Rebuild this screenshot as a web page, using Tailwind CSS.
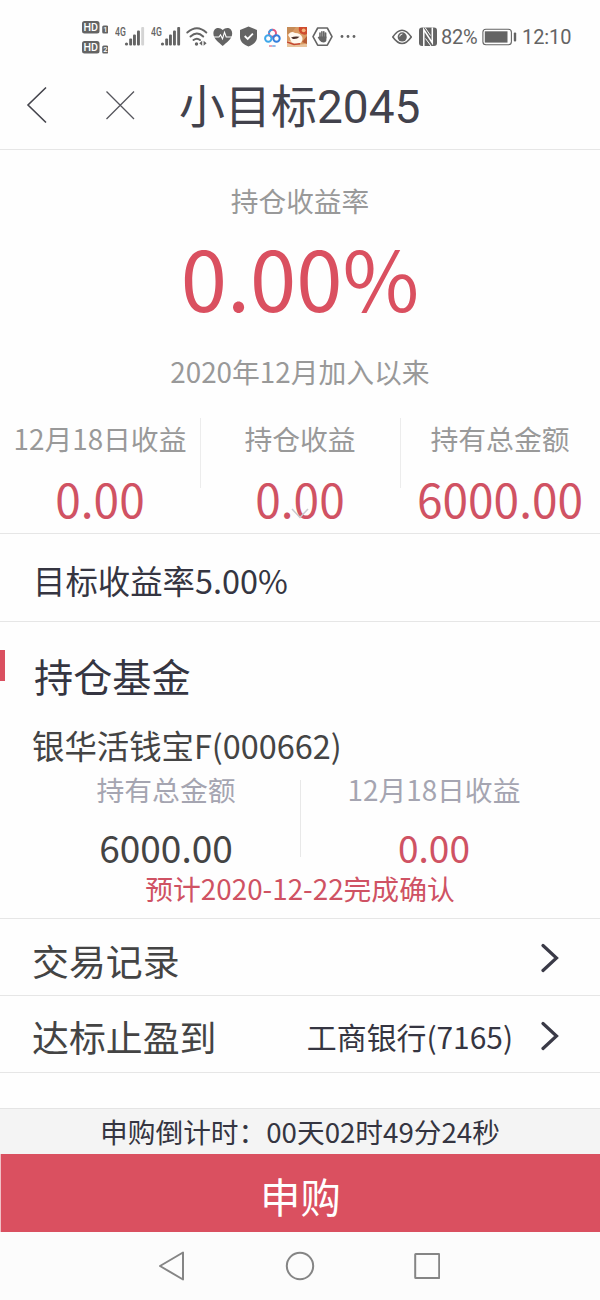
<!DOCTYPE html>
<html lang="zh-CN">
<head>
<meta charset="utf-8">
<title>小目标2045</title>
<script src="https://cdn.jsdelivr.net/npm/@tailwindcss/browser@4"></script>
</head>
<body class="w-[600px] h-[1300px] overflow-hidden bg-[#fefefe] font-['Noto_Sans_CJK_SC',sans-serif] flex flex-col whitespace-nowrap">
  <!-- Status bar -->
  <div class="h-[60px] flex items-start pt-[18px] pl-[82px] text-[#646464] shrink-0">
    <svg class="w-[26px] h-[38px] shrink-0" viewBox="0 0 26 38">
      <g fill="#646464"><rect y="3" width="17.500" height="12.500" rx="2.500"/><rect y="23" width="17.500" height="12.500" rx="2.500"/><rect x="20.200" y="7.500" width="6" height="8" rx="1.500"/><rect x="20.200" y="27.500" width="6" height="8" rx="1.500"/></g>
      <g fill="#fff" font-family="Roboto" font-weight="500"><text x="1.500" y="13.300" font-size="11.500" textLength="14.500" lengthAdjust="spacingAndGlyphs">HD</text><text x="1.500" y="33.300" font-size="11.500" textLength="14.500" lengthAdjust="spacingAndGlyphs">HD</text><text x="21.200" y="14.300" font-size="7.500">1</text><text x="21.200" y="34.300" font-size="7.500">2</text></g>
    </svg>
    <svg class="w-[30px] h-[30px] ml-[7px] shrink-0" viewBox="0 0 30 30" fill="#646464">
      <text x="0" y="17.700" font-family="Roboto" font-weight="500" font-size="12" textLength="10.800" lengthAdjust="spacingAndGlyphs">4G</text>
      <circle cx="11.500" cy="26" r="1.600"/><rect x="14.200" y="20.500" width="2.900" height="7" rx="1"/><rect x="18" y="16.500" width="2.900" height="11" rx="1"/><rect x="22" y="12.500" width="2.900" height="15" rx="1"/><rect x="26.200" y="9" width="2.900" height="18.500" rx="1" fill="#d4d4d4"/>
    </svg>
    <svg class="w-[30px] h-[30px] ml-[6px] shrink-0" viewBox="0 0 30 30" fill="#646464">
      <text x="0" y="17.700" font-family="Roboto" font-weight="500" font-size="12" textLength="10.800" lengthAdjust="spacingAndGlyphs">4G</text>
      <circle cx="11.500" cy="26" r="1.600"/><rect x="14.200" y="20.500" width="2.900" height="7" rx="1"/><rect x="18" y="16.500" width="2.900" height="11" rx="1"/><rect x="22" y="12.500" width="2.900" height="15" rx="1"/><rect x="26.200" y="9" width="2.900" height="18.500" rx="1"/>
    </svg>
    <svg class="w-[22px] h-[30px] ml-[5px] shrink-0" viewBox="0 0 22 30" fill="none" stroke="#646464" stroke-width="1.900" stroke-linecap="round">
      <path d="M1.300 14.500Q11 6 20.300 14.500M4.500 18.500Q11 12.500 17.200 18.500M7.500 22Q11 19.300 14 22"/>
      <circle cx="10.500" cy="26" r="1.700" fill="#646464" stroke="none"/><path d="M16.200 22.700v5l-3-2.500zM17.600 22.700v5l3-2.500z" fill="#646464" stroke="none"/>
    </svg>
    <svg class="w-[20px] h-[30px] ml-[5px] shrink-0" viewBox="0 0 20 30">
      <path d="M9.700 28C6 24.500.4 21 .4 15.500C.4 9.500 6.500 8.500 9.700 12C13 8.500 19.200 9.500 19.200 15.500C19.200 21 13.500 24.500 9.700 28z" fill="#646464"/>
      <path d="M0 19h6l1.500-2.200 2 4 2-6.500 1.700 4.700H20" fill="none" stroke="#fff" stroke-width="1.100"/>
    </svg>
    <svg class="w-[20px] h-[30px] ml-[5px] shrink-0" viewBox="0 0 20 30">
      <path d="M10.500 8.500L19 12v7c0 5-4 7.700-8.500 9.500C6 26.700 2 24 2 19v-7z" fill="#646464"/>
      <path d="M6.700 18l3 3 5.200-5.300" fill="none" stroke="#fff" stroke-width="1.800"/>
    </svg>
    <svg class="w-[18px] h-[30px] ml-[6px] shrink-0" viewBox="0 0 18 30" fill="none" stroke-width="2">
      <circle cx="8.500" cy="15.300" r="3.500" stroke="#e05a80"/><path d="M5 15.300a3.500 3.500 0 0 1 3.500-3.500" stroke="#3b9de8"/>
      <circle cx="4.300" cy="20.500" r="3.200" stroke="#3ea7ea"/><circle cx="12.500" cy="20.500" r="3.200" stroke="#347fdc"/>
      <path d="M5 28h3.300" stroke="#e26c8a" stroke-width="1.300"/><path d="M8.300 28h3.300" stroke="#559be0" stroke-width="1.300"/>
    </svg>
    <svg class="w-[20px] h-[30px] ml-[5px] shrink-0" viewBox="0 0 20 30">
      <rect y="9" width="20" height="20" fill="#d99a63"/>
      <path d="M0 9h9l-4 5-5 2z" fill="#c68b56"/>
      <path d="M0 23q4-1 8 2t12 0v4H0z" fill="#e8c39c"/>
      <path d="M12 9h8v7q-3 1.500-6-.5t-2-6.500z" fill="#cf4b2d"/><circle cx="16.700" cy="12.300" r="1.900" fill="#f3b47c"/>
      <path d="M1 17Q4 12 8 15Q14 15 15.500 20Q16 25.500 10 26Q3 25.500 3 20z" fill="#fff8ee"/>
      <path d="M4 19.500Q8 17.800 12.500 18.800Q10 21.500 6 21z" fill="#4b3029"/><path d="M0 24l7 2.500 6-.8" stroke="#c5472f" stroke-width="1.500" fill="none"/>
      <path d="M15 24l5-6v8z" fill="#b75c34"/>
    </svg>
    <svg class="w-[21px] h-[30px] ml-[5px] shrink-0" viewBox="0 0 21 30">
      <path d="M5.700 10h9.600l4.700 8.600-4.700 8.600H5.700L1 18.600z" fill="none" stroke="#646464" stroke-width="1.600" stroke-linejoin="round"/>
      <path d="M8 15v5M9.900 13.700v6M11.800 13.700v6M13.600 15v5" stroke="#646464" stroke-width="1.600" stroke-linecap="round"/>
      <path d="M7.200 18.500h7.200v3.300q0 2.700-3 2.700-2.300 0-3.700-2l-2-3 .8-.7z" fill="#646464"/>
    </svg>
    <svg class="w-[16px] h-[30px] ml-[7px] shrink-0" viewBox="0 0 16 30" fill="#646464"><circle cx="2" cy="18.500" r="1.400"/><circle cx="8" cy="18.500" r="1.400"/><circle cx="14" cy="18.500" r="1.400"/></svg>
    <svg class="w-[20px] h-[30px] ml-[36px] shrink-0" viewBox="0 0 20 30">
      <path d="M.8 19Q10 5.500 19.300 19Q10 32 .8 19z" fill="none" stroke="#646464" stroke-width="1.600"/><circle cx="10.200" cy="18.900" r="4.600" fill="#646464"/><path d="M7.700 18.500a2.800 2.800 0 0 1 2.700-2.500" stroke="#fff" fill="none"/>
    </svg>
    <svg class="w-[20px] h-[30px] ml-[6px] shrink-0" viewBox="0 0 20 30">
      <rect x="1" y="9.500" width="18" height="18.500" rx="3" fill="#646464"/>
      <path d="M5.800 28V11.500L14.300 25V9.500" fill="none" stroke="#fff" stroke-width="1.500"/>
      <path d="M7 9.500L12.500 17.500M7.500 20.500L13 28" fill="none" stroke="#fff" stroke-width="1"/>
    </svg>
    <span class="ml-[3px] w-[38px] h-[38px] leading-[39px] font-[Roboto] text-[20px] tracking-[-0.2px]">82%</span>
    <svg class="w-[35px] h-[30px] ml-[3px] shrink-0" viewBox="0 0 35 30">
      <rect x=".9" y="11.200" width="28.500" height="15.500" rx="3" fill="none" stroke="#646464" stroke-width="1.100"/><rect x="2.800" y="13.300" width="22.700" height="11.300" fill="#646464"/><rect x="31.800" y="14.500" width="2.400" height="9" rx="1" fill="#646464"/>
    </svg>
    <span class="ml-[5px] h-[38px] leading-[39px] font-[Roboto] text-[20px] tracking-[-0.1px]">12:10</span>
  </div>

  <!-- Title bar -->
  <header class="h-[90px] shrink-0 border-b border-[#e6e6e6] flex items-center pl-[26px]">
    <svg class="w-[22px] h-[38px]" viewBox="0 0 22 38" fill="none" stroke="#44444c" stroke-width="1.600"><path d="M20 1.500L2 19l18 17.500"/></svg>
    <svg class="w-[30px] h-[30px] ml-[57px]" viewBox="0 0 30 30" fill="none" stroke="#55555c" stroke-width="1.300"><path d="M1.500 1.500L29 29M29 1.500L1.500 29"/></svg>
    <h1 class="ml-[44px] mt-[4px] text-[46px] leading-[60px] text-[#42424c] font-[Roboto,'Noto_Sans_CJK_SC',sans-serif]">小目标2045</h1>
  </header>

  <!-- Return summary -->
  <section class="h-[384px] shrink-0 border-b border-[#e6e6e6] text-center text-[#999]">
    <p class="pt-[30px] text-[27.700px] leading-[41px]">持仓收益率</p>
    <p class="-mt-[2px] text-[83.300px] leading-[114px] text-[#da5060]">0.00%</p>
    <p class="pt-[18px] text-[27.800px] leading-[41px]">2020年12月加入以来</p>
    <div class="relative mt-[26px] grid grid-cols-3">
      <div class="relative"><p class="text-[27.800px] leading-[41px]">12月18日收益</p><p class="mt-[9px] text-[46px] leading-[60px] text-[#d05263]">0.00</p><i class="absolute -right-px top-0 w-px h-[70px] bg-[#ececec]"></i></div>
      <div class="relative"><p class="text-[27.800px] leading-[41px]">持仓收益</p><p class="mt-[9px] text-[46px] leading-[60px] text-[#d05263]">0.00</p><i class="absolute -right-px top-0 w-px h-[70px] bg-[#ececec]"></i></div>
      <div><p class="text-[27.800px] leading-[41px]">持有总金额</p><p class="mt-[9px] text-[46px] leading-[60px] text-[#d05263]">6000.00</p></div>
      <svg class="absolute left-[291px] top-[90px] w-[18px] h-[11px]" viewBox="0 0 18 11" fill="none" stroke="#c9c9cd" stroke-width="1.500"><path d="M1 1l8 8.500L17 1"/></svg>
    </div>
  </section>

  <section class="h-[88px] shrink-0 border-b border-[#e6e6e6] pl-[33px] pt-[4px] text-[32.400px] leading-[84px] text-[#353541]">目标收益率5.00%</section>

  <!-- Holdings -->
  <section class="h-[297px] shrink-0 border-b border-[#e6e6e6] relative">
    <i class="absolute left-0 top-[28px] w-[5px] h-[31px] bg-[#da5060]"></i>
    <h2 class="pl-[34px] pt-[23px] text-[39.200px] leading-[60px] text-[#353541]">持仓基金</h2>
    <p class="pl-[32px] pt-[16px] text-[32.400px] leading-[48px] text-[#444]">银华活钱宝F(000662)</p>
    <div class="grid grid-cols-2 text-center relative px-[32px]">
      <div><p class="text-[27.800px] leading-[41px] text-[#a5a5b1]">持有总金额</p><p class="mt-[15px] text-[37px] leading-[44px] text-[#444]">6000.00</p></div>
      <div><p class="text-[27.800px] leading-[41px] text-[#a5a5b1]">12月18日收益</p><p class="mt-[15px] text-[37px] leading-[44px] text-[#cf5263]">0.00</p></div>
      <i class="absolute left-[300px] top-[11px] w-px h-[77px] bg-[#e8e8e8]"></i>
    </div>
    <p class="text-center text-[27.800px] leading-[38px] text-[#cf5263]">预计2020-12-22完成确认</p>
  </section>

  <section class="h-[77px] shrink-0 border-b border-[#e6e6e6] pl-[32px] pr-[41px] flex items-center text-[#444]">
    <span class="text-[36.900px] leading-[54px] mt-[5px]">交易记录</span>
    <svg class="ml-auto mt-[2px] w-[18px] h-[30px]" viewBox="0 0 18 30" fill="none" stroke="#3a3a47" stroke-width="3.200" stroke-linecap="round"><path d="M2 2.500L15.500 15 2 27.500"/></svg>
  </section>
  <section class="h-[77px] shrink-0 border-b border-[#e6e6e6] pl-[32px] pr-[41px] flex items-center text-[#444]">
    <span class="text-[36.900px] leading-[54px] mt-[4px]">达标止盈到</span>
    <span class="ml-auto text-[29.900px] leading-[44px] mt-[3px] text-[#353541]">工商银行(7165)</span>
    <svg class="ml-[28px] mt-[3px] w-[18px] h-[30px]" viewBox="0 0 18 30" fill="none" stroke="#3a3a47" stroke-width="3.200" stroke-linecap="round"><path d="M2 2.500L15.500 15 2 27.500"/></svg>
  </section>

  <!-- Countdown and action -->
  <div class="mt-[35px] h-[46px] shrink-0 border-t border-[#e4e4e4] bg-[#f4f4f4] text-center text-[27.700px] leading-[44px] text-[#353541]">申购倒计时：00天02时49分24秒</div>
  <button class="h-[78px] shrink-0 border-l border-[#f0c0c6] bg-[#da5060] text-white text-[40.400px] leading-[78px] pt-[3px]">申购</button>

  <!-- System navigation -->
  <nav class="flex-1 bg-[#fcfcfc] flex items-center pl-[158px]">
    <svg class="w-[28px] h-[32px]" viewBox="0 0 28 32" fill="none" stroke="#858585" stroke-width="2" stroke-linejoin="round"><path d="M25 2.500v27L2 16z"/></svg>
    <svg class="w-[30px] h-[32px] ml-[99px]" viewBox="0 0 30 32" fill="none" stroke="#858585" stroke-width="2"><circle cx="15" cy="16" r="13.200"/></svg>
    <svg class="w-[26px] h-[32px] ml-[99px]" viewBox="0 0 26 32" fill="none" stroke="#858585" stroke-width="2"><rect x="1.200" y="4" width="24" height="24" rx=".5"/></svg>
  </nav>
</body>
</html>
